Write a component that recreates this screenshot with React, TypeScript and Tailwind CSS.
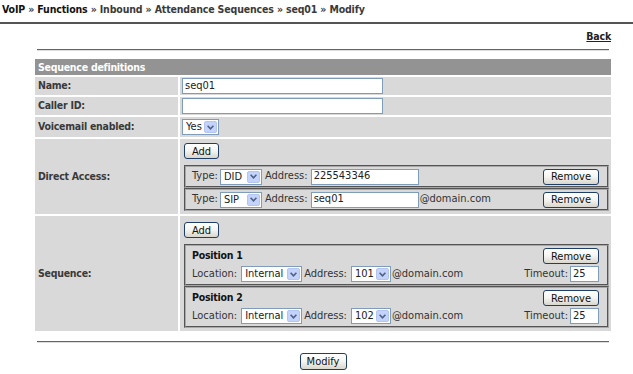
import React from "react";

function Select({ className = "", value }: { className?: string; value: string }) {
  return (
    <div className={`h-[16px] border border-[#7f9db9] bg-white flex items-stretch shrink-0 ${className}`}>
      <span className="flex-1 pl-[3px] leading-[14px] text-[#222]">{value}</span>
      <span className="w-[13px] m-[1px] rounded-[2px] bg-[#c3d3fb] border border-[#b4c6f0] flex items-center justify-center">
        <svg width="7" height="5" viewBox="0 0 7 5">
          <path d="M0.6 0.8 L3.5 3.8 L6.4 0.8" stroke="#4d6185" strokeWidth="1.6" fill="none" />
        </svg>
      </span>
    </div>
  );
}

function Btn({ className = "", children }: { className?: string; children: React.ReactNode }) {
  return (
    <button className={`block h-[16px] rounded-[3px] border border-[#1f3f66] bg-linear-to-b from-white via-[#f4f4f0] to-[#d8d6cc] text-[#111] leading-none shrink-0 ${className}`}>
      {children}
    </button>
  );
}

function TextBox({ className = "", value = "" }: { className?: string; value?: string }) {
  return (
    <input
      readOnly
      value={value}
      className={`block h-[16px] border border-[#7f9db9] bg-white px-[2px] text-[#222] outline-none shrink-0 ${className}`}
    />
  );
}

function Label({ children }: { children: React.ReactNode }) {
  return (
    <div className="bg-[#d9d9d9] pl-[3px] flex items-center font-bold text-[10.5px] tracking-[-0.25px] text-[#3a3a3a]">
      {children}
    </div>
  );
}

function AccessBox({ type, address, domain }: { type: string; address: string; domain?: boolean }) {
  return (
    <div className="border-2 [border-style:groove] border-[#a8a8a8] pl-[6px] pr-[8px] h-[23px] flex items-center">
      <span>Type:</span>
      <Select className="ml-[2px] w-[42px]" value={type} />
      <span className="ml-[3px]">Address:</span>
      <TextBox className="ml-[3px] w-[108px]" value={address} />
      {domain && <span className="ml-[1px]">@domain.com</span>}
      <Btn className="ml-auto w-[56px]">Remove</Btn>
    </div>
  );
}

function PositionBox({ n, address }: { n: number; address: string }) {
  return (
    <div className="border-2 [border-style:groove] border-[#a8a8a8] pl-[6px] pr-[8px] pt-[2px] pb-[2px]">
      <div className="h-[16px] flex items-center justify-between">
        <span className="font-bold text-[10.5px] tracking-[-0.25px] text-[#111]">Position {n}</span>
        <Btn className="w-[56px]">Remove</Btn>
      </div>
      <div className="mt-[2px] h-[16px] flex items-center">
        <span>Location:</span>
        <Select className="ml-[4px] w-[61px]" value="Internal" />
        <span className="ml-[2px]">Address:</span>
        <Select className="ml-[4px] w-[40px]" value={address} />
        <span className="ml-[1px]">@domain.com</span>
        <span className="ml-auto">Timeout:</span>
        <TextBox className="ml-[2px] w-[29px]" value="25" />
      </div>
    </div>
  );
}

export default function App() {
  return (
    <div className="w-[633px] h-[374px] bg-white text-[11px] text-[#333] [font-family:'DejaVu_Sans_Condensed','DejaVu_Sans',Verdana,sans-serif] [font-stretch:condensed] overflow-hidden">
      <div className="h-[22px] pl-[2px] pt-[2px] font-bold text-[10.5px] tracking-[-0.15px] text-[#3a3a3a]">
        <span className="text-[#111]">VoIP</span> » <span className="text-[#111]">Functions</span> » Inbound » Attendance Sequences » seq01 » Modify
      </div>
      <div className="h-[2px] bg-[#555]" />

      <div className="ml-[35px] w-[576px]">
        <div className="h-[17px] flex items-end justify-end">
          <a className="font-bold text-[10.5px] tracking-[-0.2px] underline text-[#222] leading-none">Back</a>
        </div>
        <div className="mt-[8px] mx-[2px] border-t border-[#666] border-b border-b-[#ddd]" />

        <div className="mt-[8px] grid grid-cols-[143px_431px] gap-[2px]">
          <div className="col-span-2 h-[16px] bg-[#939393] text-white font-bold text-[10.5px] tracking-[-0.25px] pl-[3px] leading-[16px]">
            Sequence definitions
          </div>

          <Label>Name:</Label>
          <div className="bg-[#d9d9d9] pl-[2px] py-[1px] flex items-center">
            <TextBox className="w-[201px]" value="seq01" />
          </div>

          <Label>Caller ID:</Label>
          <div className="bg-[#d9d9d9] pl-[2px] py-[1px] flex items-center">
            <TextBox className="w-[201px]" />
          </div>

          <Label>Voicemail enabled:</Label>
          <div className="bg-[#d9d9d9] pl-[2px] py-[2px] flex items-center">
            <Select className="w-[37px]" value="Yes" />
          </div>

          <Label>Direct Access:</Label>
          <div className="bg-[#d9d9d9] pl-[4px] pr-[2px] pt-[4px] pb-[3px] flex flex-col">
            <Btn className="w-[35px]">Add</Btn>
            <div className="mt-[6px]">
              <AccessBox type="DID" address="225543346" />
              <AccessBox type="SIP" address="seq01" domain />
            </div>
          </div>

          <Label>Sequence:</Label>
          <div className="bg-[#d9d9d9] pl-[4px] pr-[2px] pt-[6px] pb-[3px] flex flex-col">
            <Btn className="w-[35px]">Add</Btn>
            <div className="mt-[6px]">
              <PositionBox n={1} address="101" />
              <PositionBox n={2} address="102" />
            </div>
          </div>
        </div>

        <div className="mt-[10px] mx-[2px] border-t border-[#666] border-b border-b-[#ddd]" />

        <div className="mt-[10px] flex justify-center">
          <Btn className="w-[47px] h-[17px]">Modify</Btn>
        </div>
      </div>
    </div>
  );
}
